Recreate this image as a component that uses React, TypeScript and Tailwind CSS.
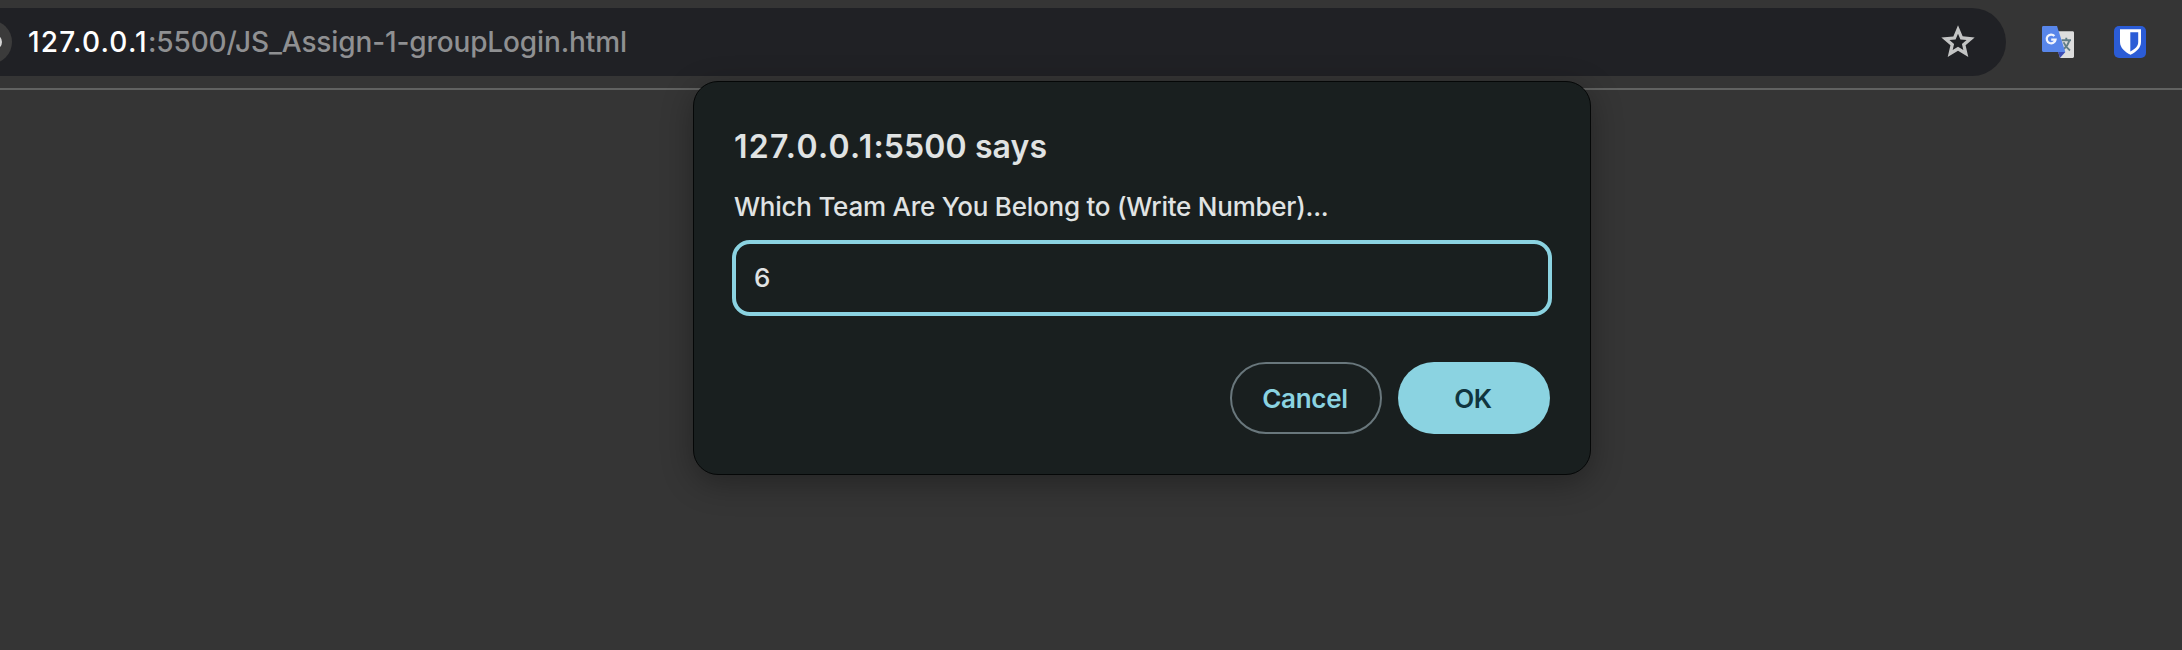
function StarIcon() {
  return (
    <svg className="size-10 shrink-0" viewBox="0 0 24 24" fill="#c3c4c4">
      <path d="M22 9.24l-7.19-.62L12 2 9.190 8.630 2 9.240l5.460 4.730L5.820 21 12 17.270 18.180 21l-1.630-7.030L22 9.240zM12 14.900l-3.200 1.950.85-3.650-2.800-2.450 3.700-.32L12 7l1.450 3.430 3.700.32-2.800 2.450.85 3.650L12 14.900z" />
    </svg>
  );
}

function TranslateIcon() {
  return (
    <svg className="size-8 shrink-0" viewBox="0 0 32 32" fill="none">
      <path d="M10 5.3h20.6c.8 0 1.4.6 1.4 1.4v23.900c0 .8-.6 1.400-1.400 1.400H18z" fill="#dddddd" />
      <path d="M16 26h7.300L18 32z" fill="#3c4cb4" />
      <path d="M19.500 14.200h9.500M24.300 11.700v2.500M27.300 14.200c-.8 3.800-3.200 7-6.300 9.300M21.600 16.300c1.200 3.300 3.200 5.700 6.400 8.200" stroke="#607d86" strokeWidth="1.900" />
      <path d="M1.400 0H15l8.300 26H1.400C.6 26 0 25.400 0 24.600V1.400C0 .6.6 0 1.400 0z" fill="#5886ea" />
      <path d="M12.400 10A4.400 4.400 0 1 0 13.500 13.700H9.200" stroke="#f1f4fd" strokeWidth="2.300" />
    </svg>
  );
}

function ShieldIcon() {
  return (
    <svg className="size-8 shrink-0" viewBox="0 0 32 32">
      <rect width="32" height="32" rx="5" fill="#2b5cd6" />
      <path d="M6 3.300h21v12.700c0 6-5 9.900-10.500 12.800C11 25.900 6 22 6 16z" fill="#fff" />
      <path d="M16.300 6.200h7.900V16c0 4.200-3.200 7-7.900 9.600z" fill="#2b5cd6" />
    </svg>
  );
}

function Toolbar() {
  return (
    <header className="flex h-[90px] items-start border-b-2 border-[#616261] pt-2">
      <div className="flex h-[68px] w-[2006px] items-center overflow-hidden rounded-r-full bg-[#202125] pr-7">
        <div className="-ml-8 flex size-11 shrink-0 items-center justify-end rounded-full bg-[#3b3b3b] pr-[10px]">
          <div className="size-4 rounded-full border-[3px] border-[#d5d5d5]" />
        </div>
        <p className="ml-4 flex-1 whitespace-nowrap text-[28px] font-medium leading-9 tracking-[-0.13px] text-[#8f9092]">
          <span className="tracking-[1.2px] text-white">127.0.0.1</span>:5500/JS_Assign-1-groupLogin.html
        </p>
        <StarIcon />
      </div>
      <div className="ml-9 flex gap-10 pt-[18px]">
        <TranslateIcon />
        <ShieldIcon />
      </div>
    </header>
  );
}

function PromptDialog() {
  return (
    <section
      role="dialog"
      className="absolute left-[693px] top-[81px] flex h-[394px] w-[898px] flex-col rounded-[25px] border border-[#050707] bg-[#191f1f] px-[38px] text-[#e0e3e3] shadow-[0_8px_32px_rgba(0,0,0,0.32)]"
    >
      <h1 className="ml-0.5 mt-[45px] whitespace-nowrap text-[32px] font-semibold leading-10 tracking-[0.1px]">
        <span className="tracking-[1.3px]">127.0.0.1</span>:5500 says
      </h1>
      <p className="ml-0.5 mt-[24px] whitespace-nowrap text-[26px] font-medium leading-8 tracking-[-0.24px]">
        Which Team Are You Belong to (Write Number)...
      </p>
      <input
        defaultValue="6"
        className="mt-[17px] h-[76px] w-[820px] shrink-0 rounded-[18px] border-4 border-[#8bd3e1] bg-transparent pb-[2px] pl-[18px] text-[26px] font-medium outline-none"
      />
      <div className="mt-[46px] flex justify-end gap-4 text-[26px] font-semibold tracking-[-0.3px]">
        <button className="h-[72px] w-[152px] rounded-full border-2 border-[#69777c] pr-0.5 text-[#8bd3e1]">
          Cancel
        </button>
        <button className="mr-0.5 h-[72px] w-[152px] rounded-full bg-[#8bd3e1] pr-0.5 text-[#10353e]">
          OK
        </button>
      </div>
    </section>
  );
}

export default function App() {
  return (
    <main className="relative h-[650px] w-[2182px] overflow-hidden bg-[#353535] font-['Inter',sans-serif]">
      <Toolbar />
      <PromptDialog />
    </main>
  );
}
